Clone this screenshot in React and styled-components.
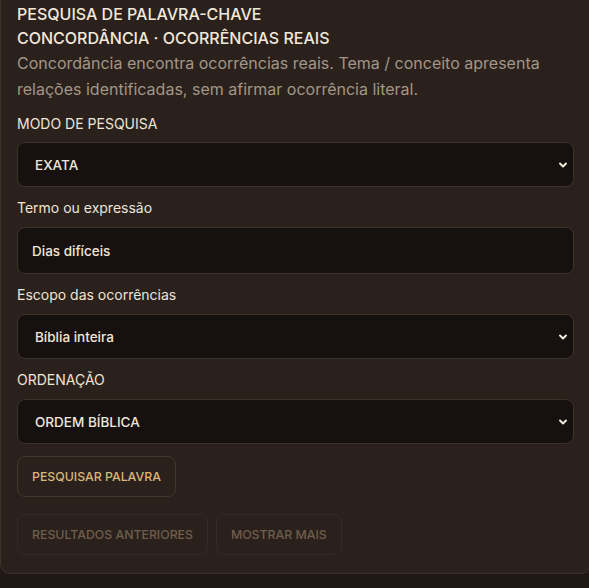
import React from 'react';
import styled, { createGlobalStyle } from 'styled-components';

const Global = createGlobalStyle`
  html, body {
    margin: 0;
    padding: 0;
    background: #1f1814;
  }
  body {
    font-family: Inter, "Liberation Sans", sans-serif;
    overflow: hidden;
  }
`;

const Panel = styled.section`
  box-sizing: border-box;
  width: calc(100% + 2px);
  margin-top: -15px;
  padding: 16px 16px 18px 16px;
  background: #2a211d;
  border: 1px solid #3d332d;
  border-radius: 10px;
  display: flex;
  flex-direction: column;
`;

const Title = styled.h2`
  margin: 0;
  font-size: 16px;
  font-weight: 500;
  line-height: 24px;
  color: #f2e8da;
`;

const Note = styled.p`
  margin: 0;
  font-size: 16px;
  line-height: 26px;
  color: #a39686;
`;

const Label = styled.label`
  display: block;
  margin: ${(p) => (p.first ? '13px' : '12px')} 0 ${(p) => (p.first ? '9px' : '10px')} 0;
  font-size: 14px;
  line-height: 18px;
  color: #efe4d5;
`;

const Field = styled.div`
  box-sizing: border-box;
  height: ${(p) => (p.input ? '47px' : '45px')};
  padding: ${(p) => (p.input ? '0 8px 0 14px' : '0 4px 0 17px')};
  background: #16110e;
  border: 1px solid #3b322c;
  border-radius: 8px;
  display: flex;
  align-items: center;
  justify-content: space-between;
  font-size: 13.5px;
  font-weight: 500;
  color: #efe6da;
`;

const Chevron = () => (
  <svg width="12" height="10" viewBox="0 0 12 10">
    <path d="M3 3.5 L6 6.5 L9 3.5" fill="none" stroke="#f2e8da" strokeWidth="2" strokeLinecap="round" strokeLinejoin="round" />
  </svg>
);

const Row = styled.div`
  display: flex;
  gap: 8px;
  margin-top: ${(p) => p.gap || '12px'};
`;

const Button = styled.button`
  box-sizing: border-box;
  height: 41px;
  padding: 0 14px;
  background: transparent;
  border: 1px solid ${(p) => (p.disabled ? '#352b26' : '#42372f')};
  border-radius: 8px;
  font-family: inherit;
  font-size: 12.3px;
  font-weight: 500;
  color: ${(p) => (p.disabled ? '#6f5e4a' : '#d8b67c')};
`;

export default function App() {
  return (
    <>
      <Global />
      <Panel>
        <Title>PESQUISA DE PALAVRA-CHAVE</Title>
        <Title>CONCORDÂNCIA · OCORRÊNCIAS REAIS</Title>
        <Note>
          Concordância encontra ocorrências reais. Tema / conceito apresenta relações identificadas, sem afirmar ocorrência literal.
        </Note>

        <Label first>MODO DE PESQUISA</Label>
        <Field>EXATA<Chevron /></Field>

        <Label>Termo ou expressão</Label>
        <Field input>Dias difíceis</Field>

        <Label>Escopo das ocorrências</Label>
        <Field>Bíblia inteira<Chevron /></Field>

        <Label>ORDENAÇÃO</Label>
        <Field>ORDEM BÍBLICA<Chevron /></Field>

        <Row>
          <Button>PESQUISAR PALAVRA</Button>
        </Row>
        <Row gap="17px">
          <Button disabled>RESULTADOS ANTERIORES</Button>
          <Button disabled>MOSTRAR MAIS</Button>
        </Row>
      </Panel>
    </>
  );
}
